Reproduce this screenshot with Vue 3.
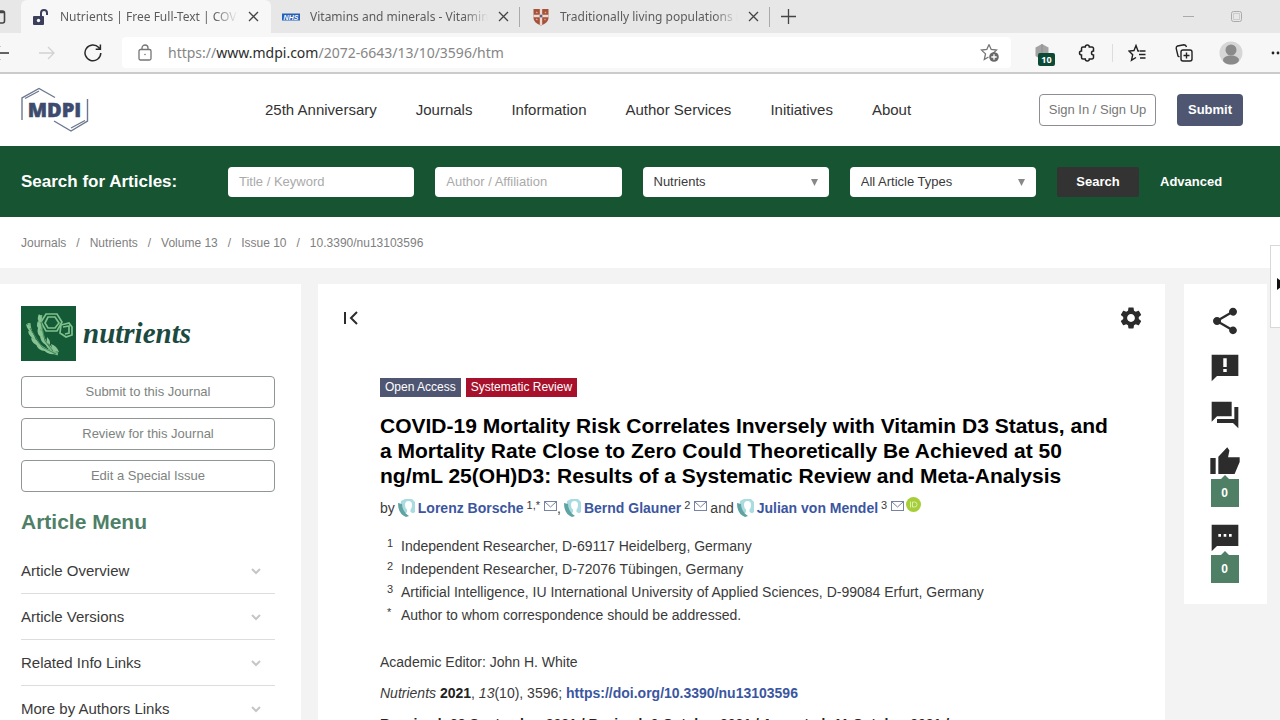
<script setup>
import { ref } from 'vue'

const tabs = [
  { title: 'Nutrients | Free Full-Text | COVID', icon: 'lock', active: true },
  { title: 'Vitamins and minerals - Vitamin', icon: 'nhs', active: false },
  { title: 'Traditionally living populations i', icon: 'shield', active: false },
]
const navItems = ['25th Anniversary', 'Journals', 'Information', 'Author Services', 'Initiatives', 'About']
const crumbs = ['Journals', 'Nutrients', 'Volume 13', 'Issue 10', '10.3390/nu13103596']
const journalActions = ['Submit to this Journal', 'Review for this Journal', 'Edit a Special Issue']
const menuItems = ['Article Overview', 'Article Versions', 'Related Info Links', 'More by Authors Links']
const authors = [
  { name: 'Lorenz Borsche', mark: '1,*', after: ',' },
  { name: 'Bernd Glauner', mark: '2', after: 'and' },
  { name: 'Julian von Mendel', mark: '3', orcid: true },
]
const affiliations = [
  ['1', 'Independent Researcher, D-69117 Heidelberg, Germany'],
  ['2', 'Independent Researcher, D-72076 Tübingen, Germany'],
  ['3', 'Artificial Intelligence, IU International University of Applied Sciences, D-99084 Erfurt, Germany'],
  ['*', 'Author to whom correspondence should be addressed.'],
]
const keyword = ref('')
const author = ref('')
const journal = ref('Nutrients')
const articleType = ref('All Article Types')
</script>

<template>
  <div class="window">
    <div class="tabstrip">
      <div class="tab-stub">
        <svg width="8" height="18" viewBox="0 0 8 18" fill="none" stroke="#444" stroke-width="1.600"><path d="M0 3h2.500q2 0 2 2v8q0 2-2 2H0M0 4.500h4" /></svg>
      </div>
      <div v-for="tab in tabs" :key="tab.title" class="tab" :class="{ active: tab.active }">
        <svg v-if="tab.icon === 'lock'" class="fav" viewBox="0 0 18 18">
          <rect x="1" y="8" width="11" height="9" rx="1" fill="#3c3f5c" />
          <path d="M9 8V5a3 3 0 0 1 6 0v2" fill="none" stroke="#3c3f5c" stroke-width="2" />
          <circle cx="6.500" cy="12.500" r="1.700" fill="#f7f7f7" />
        </svg>
        <svg v-else-if="tab.icon === 'nhs'" class="fav" viewBox="0 0 18 18">
          <rect y="5.500" width="18" height="7" fill="#2560b8" />
          <text x="9" y="11.600" text-anchor="middle" font-family="Liberation Sans, sans-serif" font-size="7" font-weight="bold" font-style="italic" fill="#fff">NHS</text>
        </svg>
        <svg v-else class="fav" viewBox="0 0 18 18">
          <path d="M1.500 1h15v9q0 4.500-7.500 7.500Q1.500 14.500 1.500 10z" fill="#a5523c" />
          <path d="M9 1v16M1.500 8h15" stroke="#f0d8cf" stroke-width="2.400" />
          <path d="M4 4l1.500 1M13 4l1 1M4 11l1.500 1M12.500 11l1 1" stroke="#e0a78c" stroke-width="1.200" />
          <circle cx="9" cy="8" r="1.500" fill="#55618c" />
        </svg>
        <span class="tab-title">{{ tab.title }}</span>
        <button class="close" aria-label="Close tab">
          <svg width="11" height="11" viewBox="0 0 11 11" stroke="#444" stroke-width="1.300"><path d="M1 1l9 9M10 1l-9 9" /></svg>
        </button>
      </div>
      <button class="new-tab" aria-label="New tab">
        <svg width="15" height="15" viewBox="0 0 15 15" stroke="#444" stroke-width="1.300"><path d="M7.500 0v15M0 7.500h15" /></svg>
      </button>
      <div class="win-controls">
        <svg width="11" height="11" viewBox="0 0 11 11" stroke="#aaa"><path d="M0 5.500h11" /></svg>
        <svg width="11" height="11" viewBox="0 0 11 11" fill="none" stroke="#aaa"><rect x=".5" y=".5" width="10" height="10" rx="2" /><rect x="2.500" y="2.500" width="6" height="6" stroke="#ccc" /></svg>
      </div>
    </div>

    <div class="toolbar">
      <div class="nav-buttons">
        <button aria-label="Back"><svg width="18" height="16" viewBox="0 0 18 16" fill="none" stroke="#333" stroke-width="1.400"><path d="M17 8H1M8 1L1 8l7 7" /></svg></button>
        <button aria-label="Forward"><svg width="16" height="16" viewBox="0 0 16 16" fill="none" stroke="#d2d2d2" stroke-width="1.300"><path d="M0 8h15M9 2l6 6-6 6" /></svg></button>
        <button aria-label="Reload"><svg width="18" height="18" viewBox="0 0 18 18" fill="none" stroke="#2a2a2a" stroke-width="1.500"><path d="M16.800 9a7.900 7.900 0 1 1-2-5.400L16.200 5M16.400.5v4.700h-4.700" /></svg></button>
      </div>
      <div class="address">
        <svg width="14" height="17" viewBox="0 0 14 17" fill="none" stroke="#757575" stroke-width="1.300"><rect x="1" y="5.500" width="12" height="10.500" rx="1.500" /><path d="M4 5.500V4a3 3 0 0 1 6 0v1.500" /><circle cx="7" cy="10.500" r=".8" fill="#757575" stroke="none" /></svg>
        <span class="url">https://<b>www.mdpi.com</b>/2072-6643/13/10/3596/htm</span>
        <svg width="20" height="20" viewBox="0 0 20 20"><path d="M9 1.500l2.200 5 5.300.6-3.900 3.700M9 1.500l-2.200 5-5.300.6 4 3.800-1.200 5.600L8.500 14" fill="none" stroke="#757575" stroke-width="1.300" /><circle cx="14" cy="14" r="4.800" fill="#686868" /><path d="M14 11.300v5.400M11.300 14h5.400" stroke="#fff" stroke-width="1.300" /></svg>
      </div>
      <div class="tools">
        <button class="ext" aria-label="Extension">
          <svg width="16" height="18" viewBox="0 0 16 18"><path d="M7 0l6.500 3.500v8.500L7 16 .5 12V3.500z" fill="#a3a3a3" /><path d="M7 0v16" stroke="#8f8f8f" /></svg>
          <span class="badge">10</span>
        </button>
        <button aria-label="Extensions"><svg width="18" height="18" viewBox="0 0 18 18" fill="none" stroke="#222" stroke-width="1.500"><path d="M5 3h2.300a2 2 0 0 1 4 0H14a1.500 1.500 0 0 1 1.500 1.500V7a2 2 0 0 0 0 4v2.500A1.500 1.500 0 0 1 14 15h-2.700a2 2 0 0 1-4 0H5a1.500 1.500 0 0 1-1.500-1.500V11a2 2 0 0 1 0-4V4.500A1.500 1.500 0 0 1 5 3z" /></svg></button>
        <span class="rule"></span>
        <button aria-label="Favorites"><svg width="18" height="18" viewBox="0 0 18 18" fill="none" stroke="#222" stroke-width="1.400"><path d="M11.500 7H10L8 1.500 6 6.500l-5 .6 3.700 3.600L3.500 16.200 8 13.500M12 7h5.500M11 10.500h6.500M12 14h5.500" /></svg></button>
        <button aria-label="Collections"><svg width="18" height="18" viewBox="0 0 18 18" fill="none" stroke="#222" stroke-width="1.400"><rect x="6" y="6" width="11" height="11" rx="2" /><path d="M11.500 8.500v6M8.500 11.500h6M4.500 13L3 12 1.200 4.500Q1 2.500 2.500 2L9 .8q2 0 2.500 2.200" /></svg></button>
        <button aria-label="Profile"><svg width="24" height="24" viewBox="0 0 24 24"><circle cx="12" cy="12" r="11.500" fill="#d6d6d6" /><circle cx="12" cy="9" r="5.500" fill="#8a8a8a" /><ellipse cx="12" cy="19" rx="8" ry="4.500" fill="#8a8a8a" /></svg></button>
        <button aria-label="More"><svg width="14" height="4" viewBox="0 0 14 4" fill="#222"><circle cx="2" cy="2" r="1.400" /><circle cx="7" cy="2" r="1.400" /><circle cx="12" cy="2" r="1.400" /></svg></button>
      </div>
    </div>

    <header class="site-header">
      <a href="#" class="mdpi" aria-label="MDPI">
        <svg width="68" height="46" viewBox="0 0 68 46" fill="none" stroke="#6d7890" stroke-width="1.400">
          <path d="M1 33V11L18 1.500l16 9M4 11.500l14-7.500M66.500 12v22L50 44 33 34M64 33.500L50 41" />
          <text x="33.500" y="30" text-anchor="middle" font-family="Open Sans, sans-serif" font-size="20" font-weight="800" fill="#3d4b6e" stroke="#3d4b6e" stroke-width=".5">MDPI</text>
        </svg>
      </a>
      <nav><a v-for="item in navItems" :key="item" href="#">{{ item }}</a></nav>
      <button class="sign">Sign In / Sign Up</button>
      <button class="submit">Submit</button>
    </header>

    <form class="search" @submit.prevent>
      <strong>Search for Articles:</strong>
      <input v-model="keyword" type="text" placeholder="Title / Keyword" aria-label="Title / Keyword" />
      <input v-model="author" type="text" placeholder="Author / Affiliation" aria-label="Author / Affiliation" />
      <div class="select">
        <select v-model="journal" aria-label="Journal"><option>Nutrients</option></select>
        <svg width="7" height="7" viewBox="0 0 7 7"><path d="M0 0h7L3.500 7z" fill="#888" /></svg>
      </div>
      <div class="select">
        <select v-model="articleType" aria-label="Article type"><option>All Article Types</option></select>
        <svg width="7" height="7" viewBox="0 0 7 7"><path d="M0 0h7L3.500 7z" fill="#888" /></svg>
      </div>
      <button type="submit">Search</button>
      <a href="#">Advanced</a>
    </form>

    <nav class="crumbs" aria-label="Breadcrumb">
      <template v-for="(c, i) in crumbs" :key="c">
        <span v-if="i">/</span><a href="#">{{ c }}</a>
      </template>
    </nav>

    <div class="body">
      <aside class="side">
        <a href="#" class="journal">
          <svg width="55" height="55" viewBox="0 0 55 55" fill="none">
            <rect width="55" height="55" fill="#155a37" />
            <g stroke="#7fc08c" stroke-width="1.700">
              <path d="M25 8h11l5 8-5 9H25l-5-9zM27 11h7l4 6-4 5h-7l-3-5z" />
              <path d="M40 19l8-2 3 4v8l-6 2-6-4zM42 21l6-1v7l-4 1" />
            </g>
            <path d="M37 48Q10 42 8 17" stroke="#76b583" stroke-width="3" />
            <path d="M35 47Q18 37 20 9" stroke="#76b583" stroke-width="2.500" />
            <g fill="#88c394">
              <path d="M5 18q5 1 6 8-5-2-6-8zM7 25q6 1 7 8-6-2-7-8zM10 32q7 1 8 8-7-2-8-8zM15 38q7 0 9 7-7 0-9-7zM22 43q7-1 11 5-7 1-11-5z" />
              <path d="M18 8q4 4 1 9-4-4-1-9zM17 15q5 4 2 9-5-4-2-9zM17 22q6 4 4 10-6-4-4-10zM19 29q7 3 6 10-6-3-6-10zM24 36q6 2 8 8-7-1-8-8zM26 31q-1 7 2 10 3-5-2-10zM30 38l2 7 6 1q-2-6-8-8z" />
            </g>
            <path d="M9 22l12 19 14 7M20 16l4 19 8 10" stroke="#3d8557" />
          </svg>
          <span>nutrients</span>
        </a>
        <button v-for="a in journalActions" :key="a" class="outline">{{ a }}</button>
        <h2>Article Menu</h2>
        <ul>
          <li v-for="m in menuItems" :key="m">
            <a href="#">{{ m }}
              <svg width="10" height="7" viewBox="0 0 10 7" fill="none" stroke="#c6c6c6" stroke-width="2"><path d="M1 1l4 4 4-4" /></svg>
            </a>
          </li>
        </ul>
      </aside>

      <main class="article">
        <div class="article-tools">
          <button aria-label="Collapse menu"><svg width="14" height="14" viewBox="0 0 14 14" fill="none" stroke="#2c2c2c" stroke-width="2"><path d="M1 1v12M13 1L7 7l6 6" /></svg></button>
          <button aria-label="Settings"><svg width="26" height="26" viewBox="0 0 24 24" fill="#2c2c2c"><path d="M19.140 12.940c.04-.3.06-.61.06-.94 0-.32-.02-.64-.07-.94l2.030-1.580c.18-.14.23-.41.12-.61l-1.920-3.320c-.12-.22-.37-.29-.59-.22l-2.390.96c-.5-.38-1.030-.7-1.620-.94l-.36-2.540c-.04-.24-.24-.41-.48-.41h-3.840c-.24 0-.43.17-.47.41l-.36 2.540c-.59.24-1.130.57-1.620.94l-2.390-.96c-.22-.08-.47 0-.59.22L2.740 8.870c-.12.21-.08.47.12.61l2.030 1.580c-.05.3-.09.63-.09.94s.02.64.07.94l-2.030 1.580c-.18.14-.23.41-.12.61l1.920 3.320c.12.22.37.29.59.22l2.390-.96c.5.38 1.030.7 1.620.94l.36 2.540c.05.24.24.41.48.41h3.840c.24 0 .44-.17.47-.41l.36-2.540c.59-.24 1.130-.56 1.620-.94l2.390.96c.22.08.47 0 .59-.22l1.920-3.320c.12-.22.07-.47-.12-.61l-2.010-1.580zM12 15.600c-1.980 0-3.600-1.620-3.600-3.600s1.620-3.600 3.600-3.600 3.600 1.620 3.600 3.600-1.620 3.600-3.600 3.600z" /></svg></button>
        </div>
        <div class="content">
          <div class="tags"><span class="open">Open Access</span><span class="review">Systematic Review</span></div>
          <h1>COVID-19 Mortality Risk Correlates Inversely with Vitamin D3 Status, and a Mortality Rate Close to Zero Could Theoretically Be Achieved at 50 ng/mL 25(OH)D3: Results of a Systematic Review and Meta-Analysis</h1>
          <div class="authors">
            <span>by</span>
            <span v-for="p in authors" :key="p.name" class="author">
              <svg class="avatar" width="18" height="18" viewBox="0 0 18 18"><path d="M3 2l4-2h7l3 3v10l-3 2H8L3 9z" fill="#a9dbe0" /><path d="M0 4l4 1q0 7 7 12l-3 1Q0 15 0 4z" fill="#5fa3a2" /><path d="M7 6q0-4 3.500-4T14 6q0 3-1.500 4.500V13l3 1.500q-3 2-8 0L9 13v-2.500Q7 9 7 6z" fill="#fff" /></svg>
              <a href="#">{{ p.name }}</a><sup>{{ p.mark }}</sup>
              <svg class="mail" width="13" height="10" viewBox="0 0 13 10" fill="none" stroke="#7783a3"><rect x=".5" y=".5" width="12" height="9" /><path d="M1 1l5.500 5L12 1" /></svg>
              <svg v-if="p.orcid" class="orcid" width="15" height="15" viewBox="0 0 15 15"><circle cx="7.500" cy="7.500" r="7.500" fill="#a6ce39" /><path d="M4.500 4.500v6M6.500 5h2a2.500 2.500 0 0 1 0 5h-2z" fill="none" stroke="#dceeb0" /></svg>
              <span v-if="p.after" :class="{ word: p.after === 'and' }">{{ p.after }}</span>
            </span>
          </div>
          <div class="affils">
            <div v-for="[n, t] in affiliations" :key="n"><sup>{{ n }}</sup><span>{{ t }}</span></div>
          </div>
          <p class="editor">Academic Editor: John H. White</p>
          <p class="cite"><em>Nutrients</em> <b>2021</b>, <em>13</em>(10), 3596; <a href="#">https://doi.org/10.3390/nu13103596</a></p>
          <p class="dates">Received: 28 September 2021 / Revised: 9 October 2021 / Accepted: 11 October 2021 /</p>
        </div>
      </main>

      <aside class="actions">
        <button aria-label="Share"><svg viewBox="0 0 24 24"><path d="M18 16.080c-.76 0-1.440.3-1.960.77L8.910 12.700c.05-.23.09-.46.09-.7s-.04-.47-.09-.7l7.050-4.110c.54.5 1.250.81 2.040.81 1.660 0 3-1.340 3-3s-1.340-3-3-3-3 1.340-3 3c0 .24.04.47.09.7L8.040 9.810C7.500 9.310 6.790 9 6 9c-1.660 0-3 1.340-3 3s1.340 3 3 3c.79 0 1.500-.31 2.040-.81l7.120 4.160c-.05.21-.08.43-.08.65 0 1.610 1.310 2.920 2.920 2.920s2.920-1.310 2.920-2.920-1.310-2.920-2.920-2.920z" /></svg></button>
        <button aria-label="Feedback"><svg viewBox="0 0 24 24"><path fill-rule="evenodd" d="M2 2h20v16H6l-4 4zM10.700 4.700v6.500h2.600V4.700zM10.700 12.700V15h2.600v-2.300z" /></svg></button>
        <button aria-label="Discuss"><svg viewBox="0 0 24 24"><path d="M2 2h15v11H6l-4 4zM19 6h3v16l-4-4H6v-3h13z" /></svg></button>
        <button aria-label="Endorse"><svg viewBox="0 0 24 24"><path d="M1 21h4V9H1v12zM23 8.500h-8.700l1-5.200L13.700 1 7 8v13h12.200L23 12z" /></svg><span class="count">0</span></button>
        <button aria-label="Comment"><svg viewBox="0 0 24 24"><path fill-rule="evenodd" d="M2 2h20v16H6l-4 4zM7 9v2h2V9zM11 9v2h2V9zM15 9v2h2V9z" /></svg><span class="count">0</span></button>
      </aside>
    </div>
    <button class="drawer" aria-label="Open drawer"><svg width="8" height="12" viewBox="0 0 8 12"><path d="M0 0l8 6-8 6z" fill="#111" /></svg></button>
  </div>
</template>

<style>
body { margin: 0; }
</style>

<style scoped>
* { box-sizing: border-box; }
.window { position: relative; height: 100vh; overflow: hidden; background: #f3f3f3; color: #3a3a3a; font: 14px/20px "Liberation Sans", Arial, sans-serif; }
button { border: 0; padding: 0; background: none; font: inherit; color: inherit; cursor: pointer; }
a { color: inherit; text-decoration: none; }
svg { flex: none; display: block; }
h1, h2, p, ul { margin: 0; padding: 0; }

.tabstrip { display: flex; height: 33px; background: #e7e7e7; font: 12px/18px "Noto Sans", "Open Sans", sans-serif; color: #5c5c5c; }
.tab-stub { width: 21px; display: flex; align-items: center; }
.tab { display: flex; align-items: center; width: 250px; padding: 0 11px; border-right: 1px solid transparent; }
.tab.active { background: #f7f7f7; border-radius: 6px 6px 0 0; }
.tab:not(.active) { background: linear-gradient(#aaa, #aaa) right center / 1px 20px no-repeat; }
.fav { width: 18px; height: 18px; margin-right: 10px; }
.tab-title { flex: 1; min-width: 0; overflow: hidden; white-space: nowrap; mask-image: linear-gradient(90deg, #000 calc(100% - 24px), transparent); }
.close { width: 11px; height: 11px; margin-left: 10px; }
.new-tab { width: 35px; display: flex; align-items: center; justify-content: center; }
.win-controls { display: flex; align-items: center; gap: 37px; margin-left: auto; padding-right: 38px; }

.toolbar { display: flex; align-items: center; height: 41px; background: #f7f7f7; border-bottom: 2px solid #cbcbcb; overflow: hidden; }
.nav-buttons { width: 122px; display: flex; align-items: center; gap: 29px; margin-left: -8px; padding-right: 8px; }
.address { flex: 1; height: 31px; margin-left: 8px; display: flex; align-items: center; padding: 0 11px 0 16px; background: #fff; border-radius: 4px; }
.url { flex: 1; margin-left: 16px; font: 14px/20px "Noto Sans", "Open Sans", sans-serif; color: #868686; }
.url b { font-weight: 400; color: #2c2c2c; }
.tools { width: 269px; display: flex; align-items: center; padding-left: 10px; }
.tools button { flex: none; width: 47px; display: flex; justify-content: center; }
.tools .ext, .tools .ext + button { width: 44px; }
.ext { position: relative; }
.badge { position: absolute; left: 17px; top: 9px; width: 17px; border-radius: 2px; background: #0d4a36; color: #fff; font: bold 9px/13px "Open Sans", sans-serif; text-align: center; }
.rule { flex: none; width: 1px; height: 18px; margin-left: 3px; background: #ddd; }

.site-header { display: flex; align-items: center; height: 72px; padding: 0 37px 0 21px; background: #fff; }
.mdpi { width: 244px; }
.site-header nav { flex: 1; display: flex; gap: 39px; color: #333; font-size: 15px; }
.sign { width: 117px; height: 32px; border: 1px solid #8d8d92; border-radius: 4px; font-size: 13px; color: #777; }
.submit { width: 66px; height: 32px; margin-left: 21px; border-radius: 4px; background: #4f5671; color: #fff; font-size: 13px; font-weight: bold; }

.search { display: grid; grid-template-columns: 186px repeat(4, 1fr) 82px 83px; gap: 21px; align-items: center; height: 71px; padding: 0 37px 0 21px; background: #175432; color: #fff; font-size: 13px; }
.search strong { font-size: 17px; white-space: nowrap; }
.search input, .search select { width: 100%; height: 30px; padding: 0 11px; border: 0; border-radius: 4px; background: #fff; color: #3a3a3a; font: inherit; appearance: none; }
.search input::placeholder { color: #aaa; opacity: 1; }
.select { position: relative; }
.select svg { position: absolute; right: 11px; top: 12px; pointer-events: none; }
.search button { height: 30px; border-radius: 2px; background: #333; font-weight: bold; }
.search a { font-weight: bold; }

.crumbs { display: flex; gap: 10px; height: 51px; align-items: center; padding: 0 21px; background: #fff; color: #808080; font-size: 12px; }

.body { display: flex; align-items: flex-start; padding: 16px 13px 0 0; }
.side { width: 301px; padding: 22px 26px 0 21px; background: #fff; }
.journal { display: flex; align-items: center; gap: 7px; margin-bottom: 15px; color: #1c4a40; font: italic bold 29px/55px "Liberation Serif", "Times New Roman", serif; }
.outline { display: block; width: 100%; height: 32px; margin-bottom: 10px; border: 1px solid #8f9693; border-radius: 4px; font-size: 13px; color: #7d8380; }
.side h2 { margin-top: 18px; color: #4f7f67; font-size: 21px; line-height: 24px; }
.side ul { margin-top: 14px; list-style: none; }
.side li { height: 46px; border-bottom: 1px solid #ddd; }
.side li a { display: flex; align-items: center; justify-content: space-between; height: 46px; padding-right: 14px; font-size: 15px; }

.article { flex: 1; min-height: 600px; margin: 0 19px 0 17px; background: #fff; }
.article-tools { display: flex; align-items: center; justify-content: space-between; height: 68px; padding: 0 21px 0 26px; }
.content { padding: 26px 40px 26px 62px; }
.tags { display: flex; gap: 5px; font-size: 12px; line-height: 19px; color: #fff; }
.tags span { padding: 0 5px; }
.open { background: #4f5671; }
.review { background: #a8112c; }
h1 { margin-top: 16px; color: #000; font-size: 21px; line-height: 25px; }
.authors { display: flex; gap: 3px; height: 20px; margin-top: 10px; }
.author { display: flex; }
.author a, .cite a { color: #3b56a0; font-weight: bold; }
.avatar { margin: 1px 2px 0 0; }
sup { font-size: 11px; line-height: 15px; vertical-align: baseline; }
.author sup { margin: 0 4px 0 3px; }
.mail { margin-top: 3px; }
.orcid { margin: -1px 0 0 2px; }
.word { margin-left: 3px; }
.affils { margin-top: 17px; line-height: 23px; }
.affils div { display: flex; }
.affils sup { width: 21px; padding-left: 7px; line-height: 17px; }
.editor { margin-top: 25px; }
.cite { margin-top: 11px; }
.cite b { color: #222; }
.dates { margin-top: 11px; font-weight: bold; color: #222; }

.actions { width: 83px; padding: 21px 2px 21px 0; display: flex; flex-direction: column; align-items: center; gap: 15px; background: #fff; }
.actions svg { width: 32px; height: 32px; fill: #2c2c2c; }
.actions button { width: 32px; }
.count { position: relative; display: block; width: 28px; height: 28px; margin: 1px auto 0; background: #4f8066; color: #fff; font-size: 12px; font-weight: bold; line-height: 28px; }
.count::before { content: ""; position: absolute; left: 9px; top: -4px; border: 5px solid transparent; border-top: 0; border-bottom: 5px solid #4f8066; }
.drawer { position: absolute; right: -1px; top: 245px; width: 11px; height: 83px; padding: 0 0 6px 6px; overflow: hidden; background: #fff; border: 1px solid #d8d8d8; }
</style>
